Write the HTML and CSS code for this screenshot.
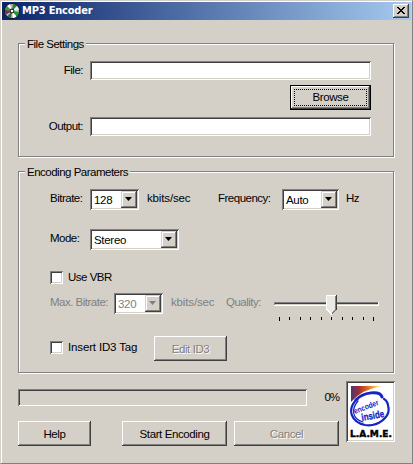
FILE: index.html
```html
<!DOCTYPE html>
<html lang="en">
<head>
<meta charset="utf-8">
<title>MP3 Encoder</title>
<link rel="stylesheet" href="styles.css">
</head>
<body>
<div class="window">
  <header class="titlebar">
    <svg class="disc" width="16" height="16" viewBox="0 0 16 16">
      <circle cx="8" cy="8" r="7.8" fill="#111"/>
      <circle cx="8" cy="8" r="7" fill="#b9bdb9"/>
      <path d="M8 8L3 3A7 7 0 0 1 6 1.300z" fill="#fff"/>
      <path d="M8 8L9 1A7 7 0 0 1 13 3z" fill="#188a30"/>
      <path d="M8 8L13 3A7 7 0 0 1 15 7z" fill="#e8f4e8"/>
      <path d="M8 8L1 7A7 7 0 0 1 3 3z" fill="#30a040"/>
      <path d="M8 8L1 7A7 7 0 0 0 2 11.500z" fill="#7c2850"/>
      <path d="M8 8L15 9A7 7 0 0 1 12.500 13.400z" fill="#1c9a38"/>
      <path d="M8 8L12.500 13.400A7 7 0 0 1 9 15z" fill="#fff"/>
      <path d="M8 8L7 15A7 7 0 0 1 3.500 13.300z" fill="#246c3c"/>
      <circle cx="8" cy="8" r="2.400" fill="#222"/>
      <circle cx="8" cy="8" r="1.300" fill="#fff"/>
    </svg>
    <h1 class="title">MP3 Encoder</h1>
    <button class="close" aria-label="Close">
      <svg width="8" height="7" viewBox="0 0 8 7" shape-rendering="crispEdges"><path d="M0 0h2v1h1v1h2v-1h1v-1h2v1h-1v1h-1v1h-1v1h1v1h1v1h1v1h-2v-1h-1v-1h-2v1h-1v1h-2v-1h1v-1h1v-1h1v-1h-1v-1h-1v-1h-1z"/></svg>
    </button>
  </header>
  <main class="body">
    <section class="group files">
      <h2 class="legend">File Settings</h2>
      <div class="row file-row"><label class="label right">File:</label><div class="field"></div></div>
      <div class="row browse-row"><button class="button default"><span class="focus">Browse</span></button></div>
      <div class="row output-row"><label class="label right output">Output:</label><div class="field"></div></div>
    </section>
    <section class="group params">
      <h2 class="legend wide">Encoding Parameters</h2>
      <div class="row rate-row">
        <label class="label bitrate">Bitrate:</label>
        <div class="select rate"><span class="value">128</span><i class="drop"><i class="arrow"></i></i></div>
        <span class="label unit">kbits/sec</span>
        <label class="label frequency">Frequency:</label>
        <div class="select freq"><span class="value">Auto</span><i class="drop"><i class="arrow"></i></i></div>
        <span class="label hz">Hz</span>
      </div>
      <div class="row mode-row">
        <label class="label mode">Mode:</label>
        <div class="select stereo"><span class="value">Stereo</span><i class="drop"><i class="arrow"></i></i></div>
      </div>
      <div class="row vbr-row"><i class="check"></i><label class="label check-label vbr">Use VBR</label></div>
      <div class="row max-row disabled">
        <label class="label max">Max. Bitrate:</label>
        <div class="select rate"><span class="value">320</span><i class="drop"><i class="arrow"></i></i></div>
        <span class="label unit">kbits/sec</span>
        <label class="label quality">Quality:</label>
        <svg class="slider" width="105" height="28" viewBox="0 0 105 28" shape-rendering="crispEdges">
          <path d="M0 9h105v4h-105z" fill="#fff"/>
          <path d="M0 9h104v3h-104z" fill="#808080"/>
          <path d="M1 10h103v1h-103z" fill="#404040"/>
          <path d="M1 11h103v1h-103z" fill="#d4d0c8"/>
          <path d="M52 2h11v15l-5.500 5l-5.500-5z" fill="#404040"/>
          <path d="M52 2h10v15l-5 5l-5-5z" fill="#fff"/>
          <path d="M61 3h1v14l-4 4l-1-1l4-4z" fill="#808080"/>
          <path d="M53 3h8v13l-4 4l-4-4z" fill="#ebe9e4"/>
          <path d="M5 24h1v4h-1zM15 24h1v3h-1zM26 24h1v3h-1zM36 24h1v3h-1zM47 24h1v3h-1zM57 24h1v3h-1zM68 24h1v3h-1zM78 24h1v3h-1zM89 24h1v3h-1zM99 24h1v4h-1z"/>
        </svg>
      </div>
      <div class="row tag-row">
        <i class="check"></i><label class="label check-label tag">Insert ID3 Tag</label>
        <button class="button edit" disabled>Edit ID3</button>
      </div>
    </section>
    <footer class="footer">
      <div class="actions">
        <div class="row progress-row"><div class="progress"></div><span class="label percent">0%</span></div>
        <div class="row button-row">
          <button class="button help">Help</button>
          <button class="button start">Start Encoding</button>
          <button class="button cancel" disabled>Cancel</button>
        </div>
      </div>
      <div class="logo">
        <svg width="45" height="57" viewBox="0 0 45 57">
          <defs>
            <linearGradient id="heat" x1="0" x2="1"><stop offset="0" stop-color="#493a70"/><stop offset=".25" stop-color="#a52c35"/><stop offset=".55" stop-color="#e67524"/><stop offset=".8" stop-color="#fac66a"/><stop offset="1" stop-color="#fff"/></linearGradient>
          </defs>
          <path d="M3 3H35Q14 6 3 19z" fill="url(#heat)"/>
          <g fill="none" stroke="#1425c4" stroke-linecap="round">
            <path d="M8 17C15 9 32 7 34 14" stroke-width="3"/>
            <path d="M8 17C-1 27 3 39 17 42C30 44 42 34 40.500 25C40 20 38 17 36 16" stroke-width="2.200"/>
            <path d="M10 18C3 26 4 36 15 39" stroke-width="1.200"/>
          </g>
          <text class="encoder" x="7" y="31" transform="rotate(-21 7 31)" textLength="26" lengthAdjust="spacingAndGlyphs">encoder</text>
          <text class="inside" x="14" y="38" transform="rotate(-10 14 38)" textLength="23" lengthAdjust="spacingAndGlyphs">inside</text>
          <text class="lame" x="2" y="54" textLength="42" lengthAdjust="spacingAndGlyphs">L.A.M.E.</text>
        </svg>
      </div>
    </footer>
  </main>
</div>
</body>
</html>
```

FILE: styles.css
```css
* { box-sizing: border-box; }
body { margin: 0; background: #d4d0c8; }
.window {
  width: 413px; height: 464px; overflow: hidden;
  background: #d4d0c8; color: #000;
  border: solid; border-width: 1px; border-color: #d4d0c8 #808080 #808080 #d4d0c8;
  box-shadow: inset 1px 1px 0 #fff;
  padding: 1px 1px 0;
  font: 11.5px/19px "Liberation Sans", Arial, sans-serif;
  letter-spacing: -0.5px;
}
.titlebar {
  display: flex; height: 18px; padding: 0 2px;
  background: linear-gradient(90deg, #0a246a, #a6caf0);
}
.disc { margin: 1px 0 0; }
.title {
  margin: 0 0 0 2px; flex: 1; color: #fff;
  font: bold 11px/17px "DejaVu Sans Condensed", "DejaVu Sans", sans-serif;
  letter-spacing: -0.2px;
}
.close {
  width: 16px; height: 14px; margin-top: 2px; padding: 3px 0 0 4px; border: 0;
  display: flex; background: #d4d0c8;
  box-shadow: inset -1px -1px #404040, inset 1px 1px #fff, inset -2px -2px #808080;
}
.body { padding: 23px 0 0 16px; }
.group {
  width: 376px; border: 1px solid #808080;
  box-shadow: 1px 1px 0 #fff, inset 1px 1px 0 #fff;
}
.files { height: 114px; margin-bottom: 14px; }
.params { height: 202px; }
.legend {
  width: 61px; height: 15px; margin: -8px 0 0 6px; padding-left: 2px;
  font: inherit; line-height: 17px; white-space: nowrap; background: #d4d0c8;
}
.legend.wide { width: 105px; }
.row { display: flex; align-items: flex-start; }
.label { white-space: nowrap; flex: none; }
.label.right { width: 71px; padding-right: 7px; text-align: right; }
.file-row { margin-top: 10px; }
.browse-row { margin: 5px 0 0 271px; }
.output-row { margin-top: 7px; }
.field {
  width: 281px; height: 19px; background: #fff;
  box-shadow: inset 1px 1px #808080, inset -1px -1px #fff, inset 2px 2px #404040, inset -2px -2px #d4d0c8;
}
.button {
  height: 25px; padding: 0; border: 0; background: #d4d0c8; color: #000;
  font: inherit; letter-spacing: -0.4px; line-height: 24px; text-align: center; white-space: nowrap;
  box-shadow: inset -1px -1px #404040, inset 1px 1px #fff, inset -2px -2px #808080;
}
.button:disabled, .disabled .value { color: #808080; }
.button:disabled { text-shadow: 1px 1px #fff; }
.default { width: 81px; padding: 3px; border: 1px solid #000; }
.focus { display: block; height: 17px; line-height: 15px; border: 1px dotted #000; }
.select {
  display: flex; flex: none; height: 21px; padding: 2px; background: #fff;
  box-shadow: inset 1px 1px #808080, inset -1px -1px #fff, inset 2px 2px #404040, inset -2px -2px #d4d0c8;
}
.value { flex: 1; padding-left: 2px; line-height: 18px; letter-spacing: -0.3px; }
.drop {
  width: 16px; height: 17px; padding: 6px 0 0 4px; background: #d4d0c8;
  box-shadow: inset -1px -1px #404040, inset 1px 1px #d4d0c8, inset -2px -2px #808080, inset 2px 2px #fff;
}
.arrow { display: block; width: 7px; height: 4px; background: #000; clip-path: polygon(0 0, 100% 0, 50% 100%); }
.disabled { color: #808080; }
.disabled .arrow { background: #808080; }
.rate { width: 49px; }
.freq { width: 57px; }
.stereo { width: 89px; }
.rate-row { margin-top: 10px; }
.bitrate, .mode { width: 71px; padding-left: 31px; }
.unit { width: 79px; padding-left: 8px; letter-spacing: -0.15px; }
.frequency { width: 64px; }
.hz { padding-left: 7px; }
.mode-row { margin-top: 19px; }
.vbr-row { margin: 21px 0 0 31px; height: 13px; }
.check {
  flex: none; width: 13px; height: 13px; background: #fff;
  box-shadow: inset 1px 1px #808080, inset -1px -1px #fff, inset 2px 2px #404040, inset -2px -2px #d4d0c8;
}
.check-label { padding-left: 5px; line-height: 13px; }
.max-row { margin-top: 9px; height: 28px; }
.max { width: 95px; padding-left: 31px; }
.max-row .unit { width: 63px; }
.quality { width: 48px; }
.slider { display: block; }
.tag-row { margin: 15px 0 0 31px; }
.tag-row .check { margin-top: 5px; }
.tag { width: 91px; padding-top: 5px; letter-spacing: -0.15px; }
.edit { width: 73px; }
.footer { display: flex; gap: 7px; padding-top: 8px; }
.actions { width: 321px; }
.progress-row { padding-top: 8px; justify-content: space-between; line-height: 17px; }
.percent { letter-spacing: -1px; }
.progress {
  width: 289px; height: 17px;
  box-shadow: inset 1px 1px #808080, inset -1px -1px #fff, inset 2px 2px #404040;
}
.button-row { margin-top: 15px; }
.help { width: 73px; margin-right: 31px; }
.start { width: 105px; margin-right: 7px; }
.cancel { width: 105px; }
.logo {
  width: 49px; height: 61px; padding: 2px; background: #fff;
  box-shadow: inset 1px 1px #808080, inset -1px -1px #fff, inset 2px 2px #404040, inset -2px -2px #d4d0c8;
}
.logo svg { display: block; }
.encoder, .inside { font: bold 8px "Liberation Sans", sans-serif; fill: #1425c4; letter-spacing: 0; }
.inside { font-size: 10px; stroke: #1425c4; stroke-width: .3px; }
.lame { font: bold 9px "DejaVu Sans", sans-serif; letter-spacing: 0; stroke: #000; stroke-width: .4px; }
```
